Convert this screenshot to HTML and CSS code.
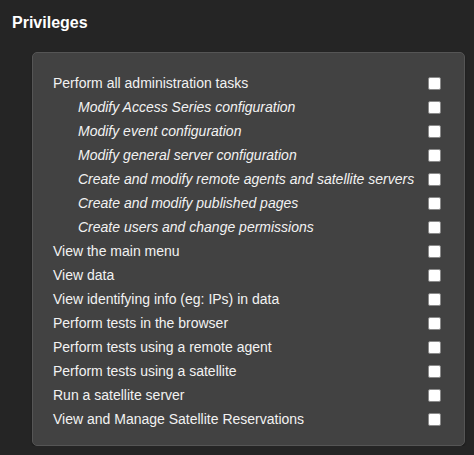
FILE: index.html
```html
<!DOCTYPE html>
<html>
<head>
<meta charset="utf-8">
<link rel="stylesheet" href="styles.css">
</head>
<body>
<h2 class="title">Privileges</h2>
<div class="panel">
  <label class="row"><span>Perform all administration tasks</span><input type="checkbox" class="cb"></label>
  <label class="row sub"><span>Modify Access Series configuration</span><input type="checkbox" class="cb"></label>
  <label class="row sub"><span>Modify event configuration</span><input type="checkbox" class="cb"></label>
  <label class="row sub"><span>Modify general server configuration</span><input type="checkbox" class="cb"></label>
  <label class="row sub"><span>Create and modify remote agents and satellite servers</span><input type="checkbox" class="cb"></label>
  <label class="row sub"><span>Create and modify published pages</span><input type="checkbox" class="cb"></label>
  <label class="row sub"><span>Create users and change permissions</span><input type="checkbox" class="cb"></label>
  <label class="row"><span>View the main menu</span><input type="checkbox" class="cb"></label>
  <label class="row"><span>View data</span><input type="checkbox" class="cb"></label>
  <label class="row"><span>View identifying info (eg: IPs) in data</span><input type="checkbox" class="cb"></label>
  <label class="row"><span>Perform tests in the browser</span><input type="checkbox" class="cb"></label>
  <label class="row"><span>Perform tests using a remote agent</span><input type="checkbox" class="cb"></label>
  <label class="row"><span>Perform tests using a satellite</span><input type="checkbox" class="cb"></label>
  <label class="row"><span>Run a satellite server</span><input type="checkbox" class="cb"></label>
  <label class="row"><span>View and Manage Satellite Reservations</span><input type="checkbox" class="cb"></label>
</div>
</body>
</html>
```
FILE: styles.css
```css
html, body {
  margin: 0;
  padding: 0;
  background: #252525;
  font-family: "Liberation Sans", Arial, sans-serif;
  color: #f2f2f2;
}
body {
  padding: 13px 7px 0 12px;
}
.title {
  margin: 0;
  font-size: 16px;
  font-weight: bold;
  line-height: 20px;
  color: #ffffff;
}
.panel {
  margin: 19px 0 0 20px;
  width: 433px;
  box-sizing: border-box;
  background: #424242;
  border: 1px solid #555555;
  border-radius: 5px;
  box-shadow: 0 1px 2px rgba(0,0,0,0.4);
  padding: 18px 23px 14px 20px;
}
.row {
  display: flex;
  align-items: center;
  justify-content: space-between;
  height: 24px;
  font-size: 14px;
}
.row.sub span {
  font-style: italic;
  padding-left: 25px;
}
.cb {
  appearance: none;
  -webkit-appearance: none;
  margin: 0;
  width: 13px;
  height: 13px;
  background: #ffffff;
  border: 1px solid #8a8a8a;
  border-radius: 2px;
  box-sizing: border-box;
}
```
